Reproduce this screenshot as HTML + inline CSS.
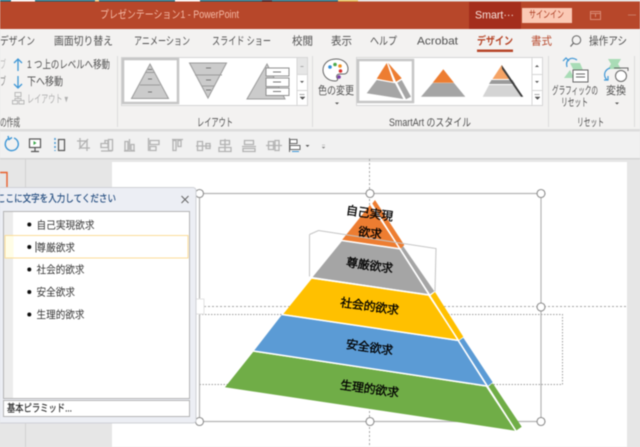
<!DOCTYPE html>
<html lang="ja"><head><meta charset="utf-8"><title>PowerPoint</title>
<style>
html,body{margin:0;padding:0;width:640px;height:447px;overflow:hidden;background:#e6e6e6}
svg{display:block;filter:blur(.4px)}
text{font-family:"Liberation Sans","Noto Sans CJK JP",sans-serif;fill:#505050;font-size:11px;dominant-baseline:central}
.r{stroke:#9b9b9b;stroke-width:1;fill:#cbcbcb}
.i{stroke:#b2b2b2;stroke-width:1.300;fill:none}
.p{fill:#000;stroke:#000;stroke-width:.3;font-size:12px;letter-spacing:-.2px;text-anchor:middle}
.t{fill:#333;font-size:10.500px}
.l{stroke:#fff;stroke-width:1.500;fill:none}
</style></head><body>
<svg width="640" height="447" viewBox="0 0 640 447" xmlns="http://www.w3.org/2000/svg">
<rect width="640" height="447" fill="#e6e6e6"/>
<!-- top strip -->
<rect width="357" height="1.500" fill="#0f6a80"/><rect x="357" width="283" height="1.500" fill="#e8e8e8"/>
<rect x="11" width="24" height="1.500" fill="#fff"/><rect x="95" width="4" height="1.500" fill="#e6d38a"/><rect x="175" width="25" height="1.500" fill="#fff"/><rect x="262" width="10" height="1.500" fill="#223"/><rect x="338" width="20" height="1.500" fill="#e6c860"/>
<!-- title bar -->
<rect y="1.500" width="640" height="27.500" fill="#b7472a"/>
<text x="100" y="15" textLength="139" lengthAdjust="spacingAndGlyphs" style="fill:#f4b9a5;font-size:11px">プレゼンテーション1 - PowerPoint</text>
<rect x="469" y="2" width="52" height="27" fill="#a42e1c"/>
<text x="475" y="15.500" textLength="39" lengthAdjust="spacingAndGlyphs" style="fill:#f7e3dc;font-size:11px">Smart···</text>
<rect x="522" y="8" width="50" height="15" fill="#fbc9b5"/>
<text x="529" y="15.500" textLength="35" lengthAdjust="spacingAndGlyphs" style="fill:#a8381e;font-size:10px">サインイン</text>
<path d="M590.500 11.500h10v8h-10zM590.500 13.500h10M595.500 14v3" fill="none" stroke="#d98a74"/>
<path d="M628 15h8" stroke="#c97a62"/>
<!-- tabs + ribbon -->
<rect y="29" width="640" height="100" fill="#f3f2f1"/>
<text x="0" y="41.500" textLength="35" lengthAdjust="spacingAndGlyphs">デザイン</text>
<text x="54" y="41.500" textLength="59" lengthAdjust="spacingAndGlyphs">画面切り替え</text>
<text x="134" y="41.500" textLength="56" lengthAdjust="spacingAndGlyphs">アニメーション</text>
<text x="212" y="41.500" textLength="59" lengthAdjust="spacingAndGlyphs">スライド ショー</text>
<text x="292" y="41.500" textLength="21" lengthAdjust="spacingAndGlyphs">校閲</text>
<text x="331" y="41.500" textLength="21" lengthAdjust="spacingAndGlyphs">表示</text>
<text x="370" y="41.500" textLength="27" lengthAdjust="spacingAndGlyphs">ヘルプ</text>
<text x="417" y="41.500" textLength="41" lengthAdjust="spacingAndGlyphs">Acrobat</text>
<text x="477" y="41.500" textLength="36" lengthAdjust="spacingAndGlyphs" style="fill:#b7472a;font-weight:700">デザイン</text>
<rect x="477" y="49.500" width="36" height="2.500" fill="#b7472a"/>
<text x="531" y="41.500" textLength="21" lengthAdjust="spacingAndGlyphs" style="fill:#b7472a">書式</text>
<circle cx="576.500" cy="40" r="4.200" fill="none" stroke="#666"/><path d="M573.500 43l-3 3.500" stroke="#666" stroke-width="1.200"/>
<text x="589" y="41.500" textLength="38" lengthAdjust="spacingAndGlyphs">操作アシ</text>
<!-- left ribbon group -->
<text x="0" y="65" textLength="6" lengthAdjust="spacingAndGlyphs" style="fill:#bbb">ブ</text>
<text x="0" y="82" textLength="6" lengthAdjust="spacingAndGlyphs" style="fill:#888">ブ</text>
<path d="M18 71V59M14 63l4-4 4 4" fill="none" stroke="#3f97d6" stroke-width="1.300"/>
<path d="M18 76v12M14 84l4 4 4-4" fill="none" stroke="#3f97d6" stroke-width="1.300"/>
<text x="27" y="65" textLength="83" lengthAdjust="spacingAndGlyphs">1 つ上のレベルへ移動</text>
<text x="27" y="82" textLength="36" lengthAdjust="spacingAndGlyphs">下へ移動</text>
<path d="M15 92.500h6v4h-6zM12.500 100.500h5v3.500h-5zM19 100.500h5v3.500h-5zM18 96.500v2M15 100v-1.500h6v1.500" fill="none" stroke="#b8b8b8"/>
<text x="27" y="99.500" textLength="41" lengthAdjust="spacingAndGlyphs" style="fill:#b0b0b0">レイアウト ▾</text>
<text x="0" y="123" textLength="20" lengthAdjust="spacingAndGlyphs">の作成</text>
<path d="M117.500 56v71M312.500 56v71M548.500 56v71M634.500 56v71" stroke="#dcdcdc"/>
<!-- layout gallery -->
<rect x="121.500" y="57.500" width="186" height="48" fill="#fff" stroke="#d6d6d6"/>
<rect x="123" y="59" width="55" height="44" fill="#fff" stroke="#c6c6c6" stroke-width="2.500"/>
<path class="r" d="M150 64L168.500 98.500H131.500Z"/>
<path d="M145 72.500h10M140 85h20" stroke="#9b9b9b"/><path d="M148 69.500h4M148 79h4M148 92h4" stroke="#777"/>
<path class="r" d="M189.500 63H226.500L208 98Z"/>
<path d="M195 75h27M202 86h12" stroke="#9b9b9b"/><path d="M206 68h5M206 80h5M206 90h5" stroke="#777"/>
<path class="r" d="M267 64L285 99H247Z"/>
<rect x="266" y="68" width="23" height="8" fill="#fff" stroke="#8f8f8f"/><rect x="266" y="78" width="23" height="8.500" fill="#fff" stroke="#8f8f8f"/><rect x="266" y="88" width="23" height="7.500" fill="#fff" stroke="#8f8f8f"/>
<path d="M273 72h8M273 82h8M273 91.500h8" stroke="#777"/>
<rect x="297" y="58" width="10" height="16" fill="#e6e6e6"/>
<path d="M297 57.500v48M297 74.500h10M297 90.500h10" stroke="#d6d6d6"/>
<path d="M300.500 66.500h3" stroke="#aaa"/><path d="M300 81l2 2 2-2z" fill="#555"/><path d="M299.500 94.500h5M300 97l2.500 2.500 2.500-2.500z" fill="#555" stroke="#555" stroke-width=".5"/>
<text x="197" y="123" textLength="36" lengthAdjust="spacingAndGlyphs">レイアウト</text>
<!-- palette -->
<path d="M336 59c-8 0-13 5-13 11 0 6 5 11 12 11 3 0 3-2 2-3-1-2 0-4 3-4h4c3 0 4-3 4-5 0-6-5-10-12-10z" fill="#fff" stroke="#666"/>
<circle cx="330" cy="67" r="1.800" fill="#2e8ad8"/><circle cx="335" cy="64.500" r="1.800" fill="#4aa84a"/><circle cx="340" cy="66" r="1.800" fill="#f09020"/><circle cx="340.500" cy="71" r="1.800" fill="#d83030"/><circle cx="339" cy="77" r="1.800" fill="#7a3fa8"/>
<text x="318" y="91" textLength="36" lengthAdjust="spacingAndGlyphs">色の変更</text>
<path d="M335 102.500h4l-2 2z" fill="#555"/>
<!-- style gallery -->
<rect x="356.500" y="57.500" width="186" height="48" fill="#fff" stroke="#d6d6d6"/>
<rect x="358" y="60" width="55" height="42" fill="#fff" stroke="#c6c6c6" stroke-width="2.500"/>
<path d="M386.700 63L393.300 81.700 376.700 78.700Z" fill="#ed7d31"/><path d="M388 62.700L401.700 78.300 396 81.700Z" fill="#ed7d31"/>
<path d="M376.700 80L395 83.300 403.300 99 366.700 93.300Z" fill="#a5a5a5"/><path d="M397.300 82.700L401.700 80 411 96.700 406 99.300Z" fill="#a5a5a5"/>
<path d="M443.300 69.300L454 82.700H432.700Z" fill="#ed7d31"/><path d="M432.700 83H454L465.300 96.700H421Z" fill="#a5a5a5"/>
<path d="M501.700 65L511 79H492.500Z" fill="#f5a365"/><path d="M491.500 80H512.500L515 84H489Z" fill="#9a9a9a"/><path d="M489 85H515.500L522 96.700H482.700Z" fill="#d4d4d4"/>
<path d="M501.700 65L523.300 96.700H521L502 69Z" fill="#3c3c3c"/>
<path d="M532 57.500v48M532 74.500h10M532 90.500h10" stroke="#d6d6d6"/>
<path d="M535 67l2-2 2 2z" fill="#555"/><path d="M535 81l2 2 2-2z" fill="#555"/><path d="M534.500 94.500h5M535 97l2.500 2.500 2.500-2.500z" fill="#555" stroke="#555" stroke-width=".5"/>
<text x="389" y="123" textLength="82" lengthAdjust="spacingAndGlyphs">SmartArt のスタイル</text>
<!-- reset icons -->
<path d="M570 63h10l6 14h-9z M564 78l6-8 4 8z" fill="#a9dcb6"/>
<path d="M577 60c-6-4-12 0-10 7M563 61l3-3 3 3" fill="none" stroke="#3f97d6" stroke-width="1.200"/>
<rect x="573" y="70" width="15" height="12" fill="#fff" stroke="#666"/><path d="M576 74h9M576 77h9" stroke="#666"/>
<text x="552" y="91" textLength="46" lengthAdjust="spacingAndGlyphs">グラフィックの</text>
<text x="561" y="103" textLength="27" lengthAdjust="spacingAndGlyphs">リセット</text>
<path d="M608 59h13l-3 5 3 5h-13l3-5z" fill="#a9dcb6"/>
<circle cx="621" cy="76" r="5.500" fill="#fff" stroke="#666"/><path d="M614 68h14v3" fill="none" stroke="#666"/>
<path d="M610 68c-6 2-7 8-3 12M604 80h4v-4" fill="none" stroke="#3f97d6" stroke-width="1.200"/>
<text x="606" y="91" textLength="20" lengthAdjust="spacingAndGlyphs">変換</text>
<path d="M615 102.500h4l-2 2z" fill="#555"/>
<text x="577" y="123" textLength="27" lengthAdjust="spacingAndGlyphs">リセット</text>
<!-- toolbar -->
<rect y="129" width="640" height="2.500" fill="#dcdcdc"/>
<rect y="131.500" width="640" height="26.500" fill="#f1f1f1"/>
<rect y="158" width="640" height="1.500" fill="#d4d4d4"/>
<path d="M8.500 138.500A6.500 6.500 0 1 0 14 138M8 136l1 3.500 3-2" fill="none" stroke="#3f97d6" stroke-width="1.400"/>
<rect x="29.500" y="139" width="11" height="8.500" fill="#fff" stroke="#555" stroke-width="1.200"/><path d="M35 148v3M31 151.500h8" stroke="#555" stroke-width="1.200"/><path d="M33.500 141l3 2-3 2z" fill="#3aa84a"/>
<path d="M55 138v13" stroke="#3f97d6" stroke-width="1.400" stroke-dasharray="2 2"/><rect x="58.500" y="139.500" width="6" height="11" fill="none" stroke="#555" stroke-width="1.200"/>
<path class="i" d="M80 138v10h10M77 141h10v10M79 149l9-10"/>
<path class="i" d="M101 143.500h7v4h-7zM108.500 139.500h4v11h-4zM105 140.500h3v3h-3zM101 151h11"/>
<path class="i" d="M125 141.500h3v9h-3zM129.500 139v11M131 144.500h3v6h-3zM124 151h11"/>
<path class="i" d="M148.500 138v13M150 140.500h9v4h-9zM150 146.500h6v4h-6z"/>
<path class="i" d="M172 139.500h11M173 140.500h3v10h-3zM178 140.500h3v6h-3z"/>
<path class="i" d="M197.500 141.500h5v9h-5zM206 143.500h4v5h-4zM196 146h15"/>
<path class="i" d="M220.500 140.500h9v4h-9zM219 147.500h12v4h-12zM225 139v13"/>
<path class="i" d="M244.500 140.500h9v4h-9zM243 148.500h12v3h-12zM242 146.500h14"/>
<path class="i" d="M268.500 141.500h5v8h-5zM275 140.500h4v10h-4zM266 145.500h16"/>
<path d="M289.500 138v14M290 139.500h7v4h-7zM290 145.500h10v4h-10z" fill="#fff" stroke="#666"/><path d="M292 151.500h7" stroke="#3f97d6"/>
<path d="M305.500 145h4l-2 2z" fill="#555"/><path d="M322 145h3M322 147h3l-1.500 1.500z" fill="#888" stroke="#888" stroke-width=".4"/>
<!-- workspace -->
<path d="M25.500 159.500V447" stroke="#d2d2d2"/>
<rect x="112" y="162" width="515" height="285" fill="#fff"/>
<path d="M0 172.500h7v20" fill="none" stroke="#e8602c" stroke-width="1.400"/>
<!-- guides -->
<path d="M369.500 159V447M112 306.500H627" stroke="#a8a8a8" stroke-dasharray="2 2"/>
<path d="M199 314.500H562.500V384.500H199" fill="none" stroke="#a0a0a0" stroke-dasharray="1.500 1.500"/>
<!-- selection frame -->
<path d="M199.500 193.500H541V421.500H199.500Z" fill="none" stroke="#b4b4b4" stroke-width="1.200"/>
<rect x="196" y="299" width="8" height="15" fill="#fff" stroke="#e2e2e2"/>
<!-- pyramid -->
<path d="M370 205L399.300 248.300 342 240Z" fill="#ed7d31"/><path d="M375 200L404.300 245 400.700 249 372.300 203.500Z" fill="#ed7d31"/>
<path d="M342 241L399.300 249.300 428.300 294.300 312.700 277Z" fill="#a5a5a5"/><path d="M403 246L434.300 291.300 430 294.300 401 249Z" fill="#a5a5a5"/>
<path d="M311.700 278.700L428.300 295.700 457.700 340 283.300 314Z" fill="#ffc000"/><path d="M435 292L463.300 336.700 459 340 430 296Z" fill="#ffc000"/>
<path d="M281.700 315L457.700 341 486 385.700 254 350.700Z" fill="#5b9bd5"/><path d="M463.300 337.700L492.700 382.300 487.700 386 459 340.700Z" fill="#5b9bd5"/>
<path d="M253.300 351.700L486 386.700 515 430.700 225 387.300Z" fill="#70ad47"/><path d="M492.700 383.300L521.700 426.700 516 430.700 487.700 387Z" fill="#70ad47"/>
<path class="l" d="M371 203.500L516 431"/>
<path class="l" d="M342 240.500L401 249M312 278L430 295M282 314.500L459 340.500M253.500 351L487 386"/>
<path d="M309.500 234.500L318.500 230.500 436 248.500 435 291.500M309.500 234.500V276.500" fill="none" stroke="#c4c4c4"/>
<g transform="translate(369.500 213.500) rotate(8)"><text class="p" x="0" y="0">自己実現</text></g>
<g transform="translate(370 233) rotate(8)"><text class="p" x="0" y="0">欲求</text></g>
<g transform="translate(369.500 265.500) rotate(8)"><text class="p" x="0" y="0">尊厳欲求</text></g>
<g transform="translate(369.500 306.500) rotate(8)"><text class="p" x="0" y="0">社会的欲求</text></g>
<g transform="translate(369.500 347.500) rotate(8)"><text class="p" x="0" y="0">安全欲求</text></g>
<g transform="translate(369.500 389) rotate(8)"><text class="p" x="0" y="0">生理的欲求</text></g>
<!-- handles -->
<g fill="#fff" stroke="#8c8c8c" stroke-width="1.100">
<circle cx="199.500" cy="193.500" r="4"/><circle cx="370" cy="193.500" r="4"/><circle cx="541" cy="193.500" r="4"/>
<circle cx="541" cy="307" r="4"/><circle cx="199.500" cy="421.500" r="4"/><circle cx="370" cy="421.500" r="4"/><circle cx="541" cy="421.500" r="4"/>
</g>
<!-- text pane -->
<path d="M-2 187.500H193a3 3 0 0 1 3 3V420a3 3 0 0 1-3 3H-2Z" fill="#eceef4" stroke="#cfd1d6"/>
<text x="-3" y="199.500" textLength="119" lengthAdjust="spacingAndGlyphs" style="fill:#1f497d;stroke:#1f497d;stroke-width:.2;font-size:10px">ここに文字を入力してください</text>
<path d="M181.500 196l7 7M188.500 196l-7 7" stroke="#666" stroke-width="1"/>
<rect x="3.500" y="211.500" width="186" height="187" fill="#fff" stroke="#b5b5b5"/>
<rect x="4" y="212" width="9" height="186" fill="#ececec"/>
<rect x="5" y="235.500" width="183" height="22.500" fill="#fff" stroke="#fbdc98"/>
<rect x="5.500" y="236" width="8" height="21.500" fill="#fffde6"/>
<g fill="#111"><circle cx="29.300" cy="224.500" r="2"/><circle cx="29.300" cy="247" r="2"/><circle cx="29.300" cy="269.500" r="2"/><circle cx="29.300" cy="292" r="2"/><circle cx="29.300" cy="314.500" r="2"/></g>
<path d="M36 241.500v11" stroke="#555"/>
<text class="t" x="36.500" y="225.500" textLength="58" lengthAdjust="spacingAndGlyphs">自己実現欲求</text>
<text class="t" x="36.500" y="248" textLength="38.500" lengthAdjust="spacingAndGlyphs">尊厳欲求</text>
<text class="t" x="36.500" y="270" textLength="48" lengthAdjust="spacingAndGlyphs">社会的欲求</text>
<text class="t" x="36.500" y="292.500" textLength="38.500" lengthAdjust="spacingAndGlyphs">安全欲求</text>
<text class="t" x="36.500" y="315" textLength="48" lengthAdjust="spacingAndGlyphs">生理的欲求</text>
<rect x="3.500" y="400.500" width="186" height="16" fill="#fff" stroke="#b5b5b5"/>
<text x="7" y="408.500" textLength="65" lengthAdjust="spacingAndGlyphs" style="fill:#222;stroke:#222;stroke-width:.15;font-size:10.500px">基本ピラミッド...</text>
</svg>
</body></html>
